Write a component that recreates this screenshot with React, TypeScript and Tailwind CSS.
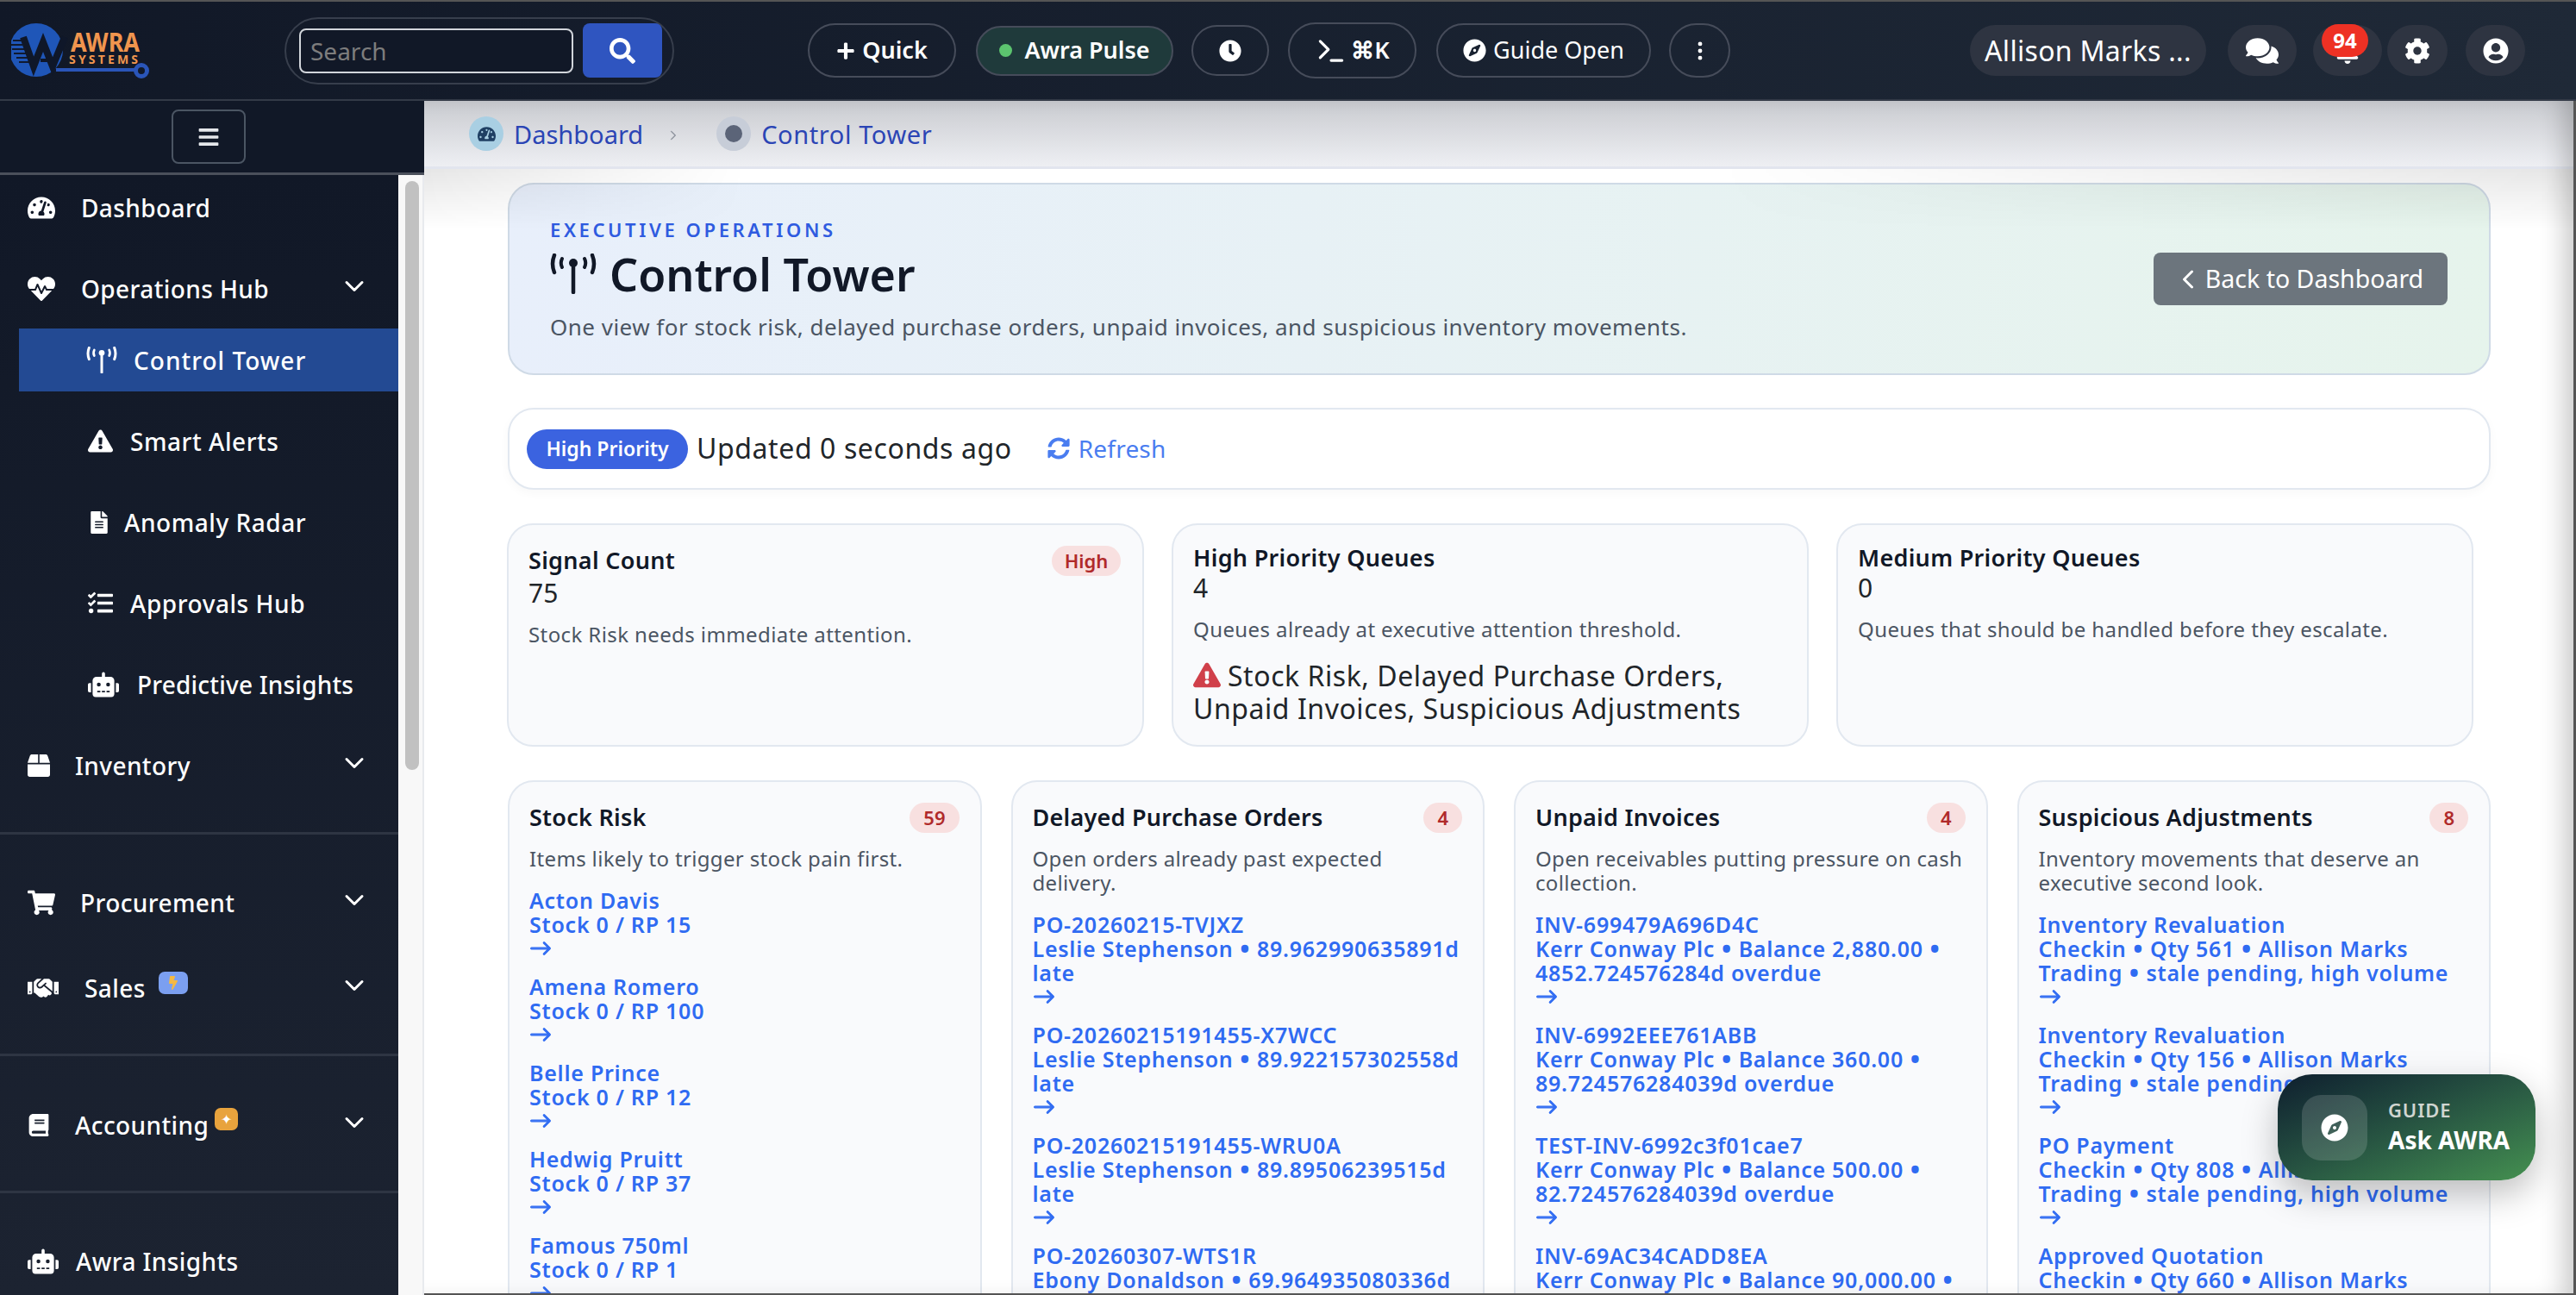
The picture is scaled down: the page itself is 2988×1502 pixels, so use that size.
import type { ReactNode } from "react";
import {
  FaBell,
  FaBook,
  FaBox,
  FaBars,
  FaClock,
  FaCog,
  FaComments,
  FaCompass,
  FaExclamationTriangle,
  FaFileAlt,
  FaHandshake,
  FaHeartbeat,
  FaPlus,
  FaRobot,
  FaSearch,
  FaShoppingCart,
  FaSyncAlt,
  FaTachometerAlt,
  FaTasks,
  FaUserCircle,
  FaBolt,
} from "react-icons/fa";
import { BsArrowRight, BsChevronDown, BsChevronLeft, BsChevronRight, BsThreeDotsVertical } from "react-icons/bs";
import { Terminal } from "lucide-react";

const font = "font-['Noto_Sans',sans-serif]";

const Logo = () => (
  <svg width="166" height="68" viewBox="0 0 166 68" className="shrink-0">
    <circle cx="29" cy="33" r="31" fill="#1f56b8" />
    <path d="M52 56h94" stroke="#2a55b8" strokeWidth="4" />
    <circle cx="151" cy="57" r="6.5" fill="none" stroke="#2a55b8" strokeWidth="5" />
    <path d="M2 22h10M0 27h13M1 32h15M3 37h14M6 42h13M9 47h12" stroke="#101a30" strokeWidth="2" />
    <path d="M14 18l12 34 11-28 11 28 14-34" fill="none" stroke="#0f1729" strokeWidth="8" />
    <path d="M34 45h18" stroke="#0f1729" strokeWidth="4" />
    <text x="69" y="35" fill="#f0954e" fontSize="30" fontWeight="700" fontFamily="Noto Sans" textLength="80" lengthAdjust="spacingAndGlyphs">AWRA</text>
    <text x="67" y="49" fill="#f0954e" fontSize="14" fontWeight="700" fontFamily="Noto Sans" textLength="80">SYSTEMS</text>
  </svg>
);

const TowerIcon = ({ width, className = "" }: { width: number; className?: string }) => (
  <svg width={width} height={(width * 47) / 54} viewBox="0 0 54 47" fill="none" stroke="currentColor" strokeLinecap="round" className={`shrink-0 ${className}`}>
    <circle cx="27" cy="11" r="5" fill="currentColor" stroke="none" />
    <path d="M27 12v33" strokeWidth="4.5" />
    <path d="M5 2q-4 10 0 20M49 2q4 10 0 20" strokeWidth="4.5" />
    <path d="M14 6q-2.500 5 0 10M40 6q2.500 5 0 10" strokeWidth="4" />
  </svg>
);

const HeaderPill = ({ className, children }: { className: string; children: ReactNode }) => (
  <div className={`flex items-center justify-center rounded-[32px] border-2 border-[#464c5a] text-[27px] text-white ${className}`}>
    {children}
  </div>
);

const UserPill = ({ className, children }: { className: string; children: ReactNode }) => (
  <div className={`flex h-[59px] items-center justify-center rounded-[30px] bg-[#2e3441] text-white ${className}`}>{children}</div>
);

const Header = () => (
  <header className="flex h-[117px] shrink-0 items-center border-t-2 border-b-2 border-t-[#555] border-b-[#333a47] bg-gradient-to-r from-[#111827] to-[#1f2937] pl-[13px]">
    <Logo />
    <div className="ml-[151px] flex h-[78px] w-[452px] items-center rounded-[39px] border-2 border-[#373e4c] pl-[15px]">
      <input
        placeholder="Search"
        className="h-[52px] w-[318px] rounded-[8px] border-2 border-[#d1d5db] bg-[#111827] px-[11px] text-[28px] text-white outline-none placeholder:text-[#7d7d7d]"
      />
      <div className="ml-[11px] flex h-[63px] w-[92px] items-center justify-center rounded-[8px] bg-[#2f55c0] text-white">
        <FaSearch size={30} />
      </div>
    </div>
    <div className="ml-[155px] flex items-center">
      <HeaderPill className="h-[63px] w-[172px] gap-[8px] font-semibold">
        <FaPlus size={22} /> Quick
      </HeaderPill>
      <HeaderPill className="ml-[23px] h-[58px] w-[229px] gap-[14px] border-[#2f6a50] bg-[#1f3a3b] font-semibold">
        <span className="h-[15px] w-[15px] rounded-full bg-[#5cc46f]" /> Awra Pulse
      </HeaderPill>
      <HeaderPill className="ml-[21px] h-[59px] w-[90px]">
        <FaClock size={26} />
      </HeaderPill>
      <HeaderPill className="ml-[22px] h-[65px] w-[149px] gap-[4px] font-semibold">
        <Terminal size={38} /> ⌘K
      </HeaderPill>
      <HeaderPill className="ml-[23px] h-[63px] w-[249px] gap-[8px]">
        <FaCompass size={27} /> Guide Open
      </HeaderPill>
      <HeaderPill className="ml-[21px] h-[63px] w-[71px]">
        <BsThreeDotsVertical size={26} />
      </HeaderPill>
    </div>
    <div className="ml-auto flex items-center pr-[59px]">
      <UserPill className="w-[274px] text-[32px] tracking-[0.3px]">Allison Marks ...</UserPill>
      <UserPill className="ml-[25px] w-[80px]">
        <FaComments size={38} />
      </UserPill>
      <UserPill className="relative ml-[19px] w-[80px]">
        <FaBell size={28} className="mt-[2px]" />
        <span className="absolute left-[10px] top-[-1px] flex h-[38px] w-[54px] items-center justify-center rounded-full bg-[#ee3124] text-[24px] font-bold">
          94
        </span>
      </UserPill>
      <UserPill className="ml-[6px] w-[70px]">
        <FaCog size={30} />
      </UserPill>
      <UserPill className="ml-[21px] w-[69px]">
        <FaUserCircle size={30} />
      </UserPill>
    </div>
  </header>
);

const NavRow = ({
  icon,
  label,
  gap,
  chevron,
  badge,
  className = "",
}: {
  icon: ReactNode;
  label: string;
  gap: string;
  chevron?: boolean;
  badge?: ReactNode;
  className?: string;
}) => (
  <div className={`flex h-[73px] items-center text-[28px] font-medium text-white ${className}`}>
    {icon}
    <span className={gap}>{label}</span>
    {badge}
    {chevron && <BsChevronDown size={24} className="ml-auto mr-[39px] mt-[-6px]" strokeWidth={1} />}
  </div>
);

const Sidebar = () => (
  <aside className="flex w-[492px] shrink-0 flex-col overflow-hidden">
    <div className="flex h-[86px] shrink-0 items-center justify-center border-b-[3px] border-[#4b505b] bg-[#111827] pr-[8px]">
      <div className="flex h-[63px] w-[86px] items-center justify-center rounded-[8px] border-2 border-[#4b5563] text-[#e5e7eb]">
        <FaBars size={26} />
      </div>
    </div>
    <div className="flex min-h-0 flex-1">
      <nav className="w-[462px] bg-gradient-to-b from-[#111827] to-[#1c2331] pt-[1px] tracking-[0.4px]">
        <div className="pl-[32px]">
          <NavRow icon={<FaTachometerAlt size={32} />} label="Dashboard" gap="ml-[30px]" className="mb-[21px]" />
          <NavRow icon={<FaHeartbeat size={32} />} label="Operations Hub" gap="ml-[30px]" chevron className="mb-[10px]" />
        </div>
        <div className="ml-[22px] flex h-[73px] items-center bg-[#234a93] pl-[78px] text-[28px] font-medium tracking-[1px] text-white">
          <TowerIcon width={36} />
          <span className="ml-[19px]">Control Tower</span>
        </div>
        <div className="pl-[102px] pt-[21px] tracking-[0.55px]">
          <NavRow icon={<FaExclamationTriangle size={29} />} label="Smart Alerts" gap="ml-[20px]" className="mb-[21px]" />
          <NavRow icon={<FaFileAlt size={26} />} label="Anomaly Radar" gap="ml-[16px]" className="mb-[21px]" />
          <NavRow icon={<FaTasks size={29} />} label="Approvals Hub" gap="ml-[20px]" className="mb-[21px]" />
          <NavRow icon={<FaRobot size={36} />} label="Predictive Insights" gap="ml-[21px]" className="mb-[21px] tracking-[0.2px]" />
        </div>
        <div className="border-b-[3px] border-[#2e3543] pb-[41px] pl-[32px]">
          <NavRow icon={<FaBox size={26} />} label="Inventory" gap="ml-[29px]" chevron />
        </div>
        <div className="border-b-[3px] border-[#2e3543] pb-[40px] pl-[32px] pt-[42px]">
          <NavRow icon={<FaShoppingCart size={32} />} label="Procurement" gap="ml-[29px]" chevron className="mb-[26px]" />
          <NavRow
            icon={<FaHandshake size={36} />}
            label="Sales"
            gap="ml-[30px]"
            chevron
            badge={
              <span className="ml-[15px] mt-[-12px] flex h-[26px] w-[34px] items-center justify-center rounded-[7px] bg-[#7b9ff0]">
                <FaBolt size={16} className="text-[#f5b942]" />
              </span>
            }
          />
        </div>
        <div className="border-b-[3px] border-[#2e3543] pb-[40px] pl-[32px] pt-[43px]">
          <NavRow
            icon={<FaBook size={26} />}
            label="Accounting"
            gap="ml-[29px]"
            chevron
            badge={
              <span className="ml-[7px] mt-[-14px] flex h-[26px] w-[27px] items-center justify-center rounded-[7px] bg-[#e8a33d] text-[16px] text-white">
                ✦
              </span>
            }
          />
        </div>
        <div className="pl-[32px] pt-[42px]">
          <NavRow icon={<FaRobot size={36} />} label="Awra Insights" gap="ml-[20px]" />
        </div>
      </nav>
      <div className="w-[30px] border-r-2 border-[#e8eaee] bg-[#f8f8f8] pl-[8px] pt-[7px]">
        <div className="h-[683px] w-[16px] rounded-full bg-[#c1c1c1]" />
      </div>
    </div>
  </aside>
);

const Breadcrumb = () => (
  <div className="flex h-[79px] shrink-0 items-center border-b-[3px] border-[#e2e5ee] bg-gradient-to-b from-[#c9cbd0] to-[#eeeff3] pl-[52px] text-[29px] text-[#2b45b5]">
    <span className="flex h-[40px] w-[40px] items-center justify-center rounded-full bg-[#a9cfe3] text-[#1f3f63]">
      <FaTachometerAlt size={21} />
    </span>
    <span className="ml-[12px] pt-[2px]">Dashboard</span>
    <BsChevronRight size={12} className="ml-[29px] mt-[4px] text-[#8a8f9a]" strokeWidth={1} />
    <span className="ml-[44px] flex h-[40px] w-[40px] items-center justify-center rounded-full bg-[#c7cdd8]">
      <span className="h-[20px] w-[20px] rounded-full bg-[#5b6478]" />
    </span>
    <span className="ml-[12px] pt-[2px] tracking-[0.6px]">Control Tower</span>
  </div>
);

const Hero = () => (
  <div className="flex h-[223px] items-center justify-between rounded-[30px] border-2 border-[#cfdae6] bg-gradient-to-r from-[#e8effb] to-[#e6f4ec] pl-[47px] pr-[48px]">
    <div>
      <div className="text-[22px] font-semibold leading-[30px] tracking-[3.6px] text-[#2f5be0]">EXECUTIVE OPERATIONS</div>
      <h1 className="mt-[2px] flex items-center text-[52px] font-semibold leading-[70px] text-[#111827]">
        <TowerIcon width={54} className="mr-[15px]" /> Control Tower
      </h1>
      <p className="mt-[8px] text-[26px] leading-[36px] tracking-[0.48px] text-[#4b5563]">
        One view for stock risk, delayed purchase orders, unpaid invoices, and suspicious inventory movements.
      </p>
    </div>
    <div className="flex h-[61px] w-[341px] items-center justify-center gap-[8px] rounded-[8px] bg-[#6c757d] text-[28.500px] text-white">
      <BsChevronLeft size={24} strokeWidth={1} /> Back to Dashboard
    </div>
  </div>
);

const StatusBar = () => (
  <div className="mt-[38px] flex h-[95px] items-center rounded-[30px] border-2 border-[#e2e8f0] bg-white pl-[20px] shadow-[0_4px_12px_rgba(0,0,0,0.03)]">
    <span className="flex h-[46px] w-[187px] items-center justify-center rounded-full bg-[#3b63e0] text-[23px] font-semibold text-white">
      High Priority
    </span>
    <span className="ml-[10px] mt-[-2px] text-[32px] tracking-[0.6px] text-[#212529]">Updated 0 seconds ago</span>
    <span className="ml-[41px] mt-[-2px] flex items-center gap-[10px] text-[28px] tracking-[0.2px] text-[#4a7df0]">
      <FaSyncAlt size={26} /> Refresh
    </span>
  </div>
);

const Kpi = ({
  title,
  value,
  note,
  high,
  children,
  top,
  valueGap,
}: {
  title: string;
  value: string;
  note: string;
  high?: boolean;
  children?: ReactNode;
  top: string;
  valueGap: string;
}) => (
  <div className={`relative h-[259px] rounded-[30px] border-2 border-[#e2e8f0] bg-[#f9fafc] px-[23px] ${top}`}>
    {high && (
      <span className="absolute right-[25px] top-[24px] flex h-[35px] w-[80px] items-center justify-center rounded-full bg-[#f8e0e0] text-[22px] font-semibold text-[#b02a2a]">
        High
      </span>
    )}
    <div className="text-[27px] font-semibold leading-[36px] tracking-[0.3px] text-[#111827]">{title}</div>
    <div className={`text-[30px] leading-[36px] text-[#212529] ${valueGap}`}>{value}</div>
    <div className="mt-[13px] text-[24px] leading-[34px] tracking-[0.4px] text-[#4b5563]">{note}</div>
    {children}
  </div>
);

const KpiRow = () => (
  <div className="ml-[-1px] mt-[39px] grid grid-cols-[repeat(3,739px)] gap-[32px]">
    <Kpi top="pt-[23px]" valueGap="mt-[2px]" title="Signal Count" value="75" note="Stock Risk needs immediate attention." high />
    <Kpi top="pt-[20px]" valueGap="mt-[-1px]" title="High Priority Queues" value="4" note="Queues already at executive attention threshold.">
      <div className="mt-[18px] text-[32px] leading-[38px] tracking-[0.55px] text-[#212529]">
        <FaExclamationTriangle size={32} className="mr-[8px] inline align-[-3px] text-[#d0404a]" />
        Stock Risk, Delayed Purchase Orders, Unpaid Invoices, Suspicious Adjustments
      </div>
    </Kpi>
    <Kpi top="pt-[20px]" valueGap="mt-[-1px]" title="Medium Priority Queues" value="0" note="Queues that should be handled before they escalate." />
  </div>
);

type Queue = { title: string; count: string; desc: string; items: string[][] };

const queues: Queue[] = [
  {
    title: "Stock Risk",
    count: "59",
    desc: "Items likely to trigger stock pain first.",
    items: [
      ["Acton Davis", "Stock 0 / RP 15"],
      ["Amena Romero", "Stock 0 / RP 100"],
      ["Belle Prince", "Stock 0 / RP 12"],
      ["Hedwig Pruitt", "Stock 0 / RP 37"],
      ["Famous 750ml", "Stock 0 / RP 1"],
    ],
  },
  {
    title: "Delayed Purchase Orders",
    count: "4",
    desc: "Open orders already past expected delivery.",
    items: [
      ["PO-20260215-TVJXZ", "Leslie Stephenson • 89.962990635891d late"],
      ["PO-20260215191455-X7WCC", "Leslie Stephenson • 89.922157302558d late"],
      ["PO-20260215191455-WRU0A", "Leslie Stephenson • 89.89506239515d late"],
      ["PO-20260307-WTS1R", "Ebony Donaldson • 69.964935080336d late"],
    ],
  },
  {
    title: "Unpaid Invoices",
    count: "4",
    desc: "Open receivables putting pressure on cash collection.",
    items: [
      ["INV-699479A696D4C", "Kerr Conway Plc • Balance 2,880.00 • 4852.724576284d overdue"],
      ["INV-6992EEE761ABB", "Kerr Conway Plc • Balance 360.00 • 89.724576284039d overdue"],
      ["TEST-INV-6992c3f01cae7", "Kerr Conway Plc • Balance 500.00 • 82.724576284039d overdue"],
      ["INV-69AC34CADD8EA", "Kerr Conway Plc • Balance 90,000.00 • 62.724576284039d overdue"],
    ],
  },
  {
    title: "Suspicious Adjustments",
    count: "8",
    desc: "Inventory movements that deserve an executive second look.",
    items: [
      ["Inventory Revaluation", "Checkin • Qty 561 • Allison Marks Trading • stale pending, high volume"],
      ["Inventory Revaluation", "Checkin • Qty 156 • Allison Marks Trading • stale pending, high volume"],
      ["PO Payment", "Checkin • Qty 808 • Allison Marks Trading • stale pending, high volume"],
      ["Approved Quotation", "Checkin • Qty 660 • Allison Marks Trading • stale pending, high volume"],
    ],
  },
];

const withDots = (text: string) =>
  text.split("•").map((part, i) => (
    <span key={i}>
      {i > 0 && <span className="relative top-[2px] text-[1.3em] leading-[0]">•</span>}
      {part}
    </span>
  ));

const QueueCard = ({ q }: { q: Queue }) => (
  <div className="rounded-[30px] border-2 border-[#e2e8f0] bg-[#f9fafc] pl-[23px] pr-[24px] pt-[23px]">
    <div className="flex items-center justify-between">
      <span className="text-[27px] font-semibold leading-[36px] tracking-[0.25px] text-[#111827]">{q.title}</span>
      <span className="flex h-[35px] min-w-[44px] items-center justify-center rounded-full bg-[#f8e0e0] px-[16px] text-[22px] font-semibold text-[#b02a2a]">
        {q.count}
      </span>
    </div>
    <p className="mt-[16px] text-[24px] leading-[28px] tracking-[0.35px] text-[#4b5563]">{q.desc}</p>
    <div className="mt-[20px]">
      {q.items.map((item, i) => (
        <div key={i} className="mt-[16px] text-[25px] font-semibold leading-[28px] tracking-[0.75px] text-[#2f6bf2]">
          <div>{item[0]}</div>
          <div>{withDots(item[1])}</div>
          <div className="flex h-[28px] items-center">
            <BsArrowRight size={26} strokeWidth={0.7} />
          </div>
        </div>
      ))}
    </div>
  </div>
);

const GuideButton = () => (
  <div className="absolute left-[2642px] top-[1246px] flex h-[123px] w-[299px] items-center rounded-[40px] bg-gradient-to-br from-[#0f1f2e] to-[#459150] pl-[28px] shadow-[0_16px_40px_rgba(0,0,0,0.25)]">
    <span className="flex h-[76px] w-[76px] items-center justify-center rounded-[22px] bg-white/15 text-white">
      <FaCompass size={32} />
    </span>
    <div className="ml-[24px] mt-[-2px]">
      <div className="text-[22px] font-semibold leading-[28px] tracking-[0.04em] text-[#d0d5d0]">GUIDE</div>
      <div className="mt-[3px] text-[28px] font-bold leading-[36px] text-white">Ask AWRA</div>
    </div>
  </div>
);

export default function App() {
  return (
    <div className={`relative flex h-[1502px] w-[2988px] flex-col overflow-hidden bg-white ${font}`}>
      <Header />
      <div className="flex min-h-0 flex-1">
        <Sidebar />
        <main className="relative min-w-0 flex-1 overflow-hidden border-b-2 border-r-[3px] border-[#555]">
          <Breadcrumb />
          <div className="pl-[97px] pr-[96px] pt-[16px]">
            <Hero />
            <StatusBar />
            <KpiRow />
            <div className="mt-[39px] grid grid-cols-4 gap-[34px]">
              {queues.map((q) => (
                <QueueCard key={q.title} q={q} />
              ))}
            </div>
          </div>
          <div className="pointer-events-none absolute inset-0 shadow-[inset_-24px_0_28px_-12px_rgba(0,0,0,0.2)]" />
          <div className="pointer-events-none absolute left-0 right-0 top-[79px] h-[70px] bg-gradient-to-b from-black/10 to-transparent [mask-image:linear-gradient(to_right,black,transparent_15%,transparent_60%,black)]" />
        </main>
      </div>
      <GuideButton />
    </div>
  );
}
